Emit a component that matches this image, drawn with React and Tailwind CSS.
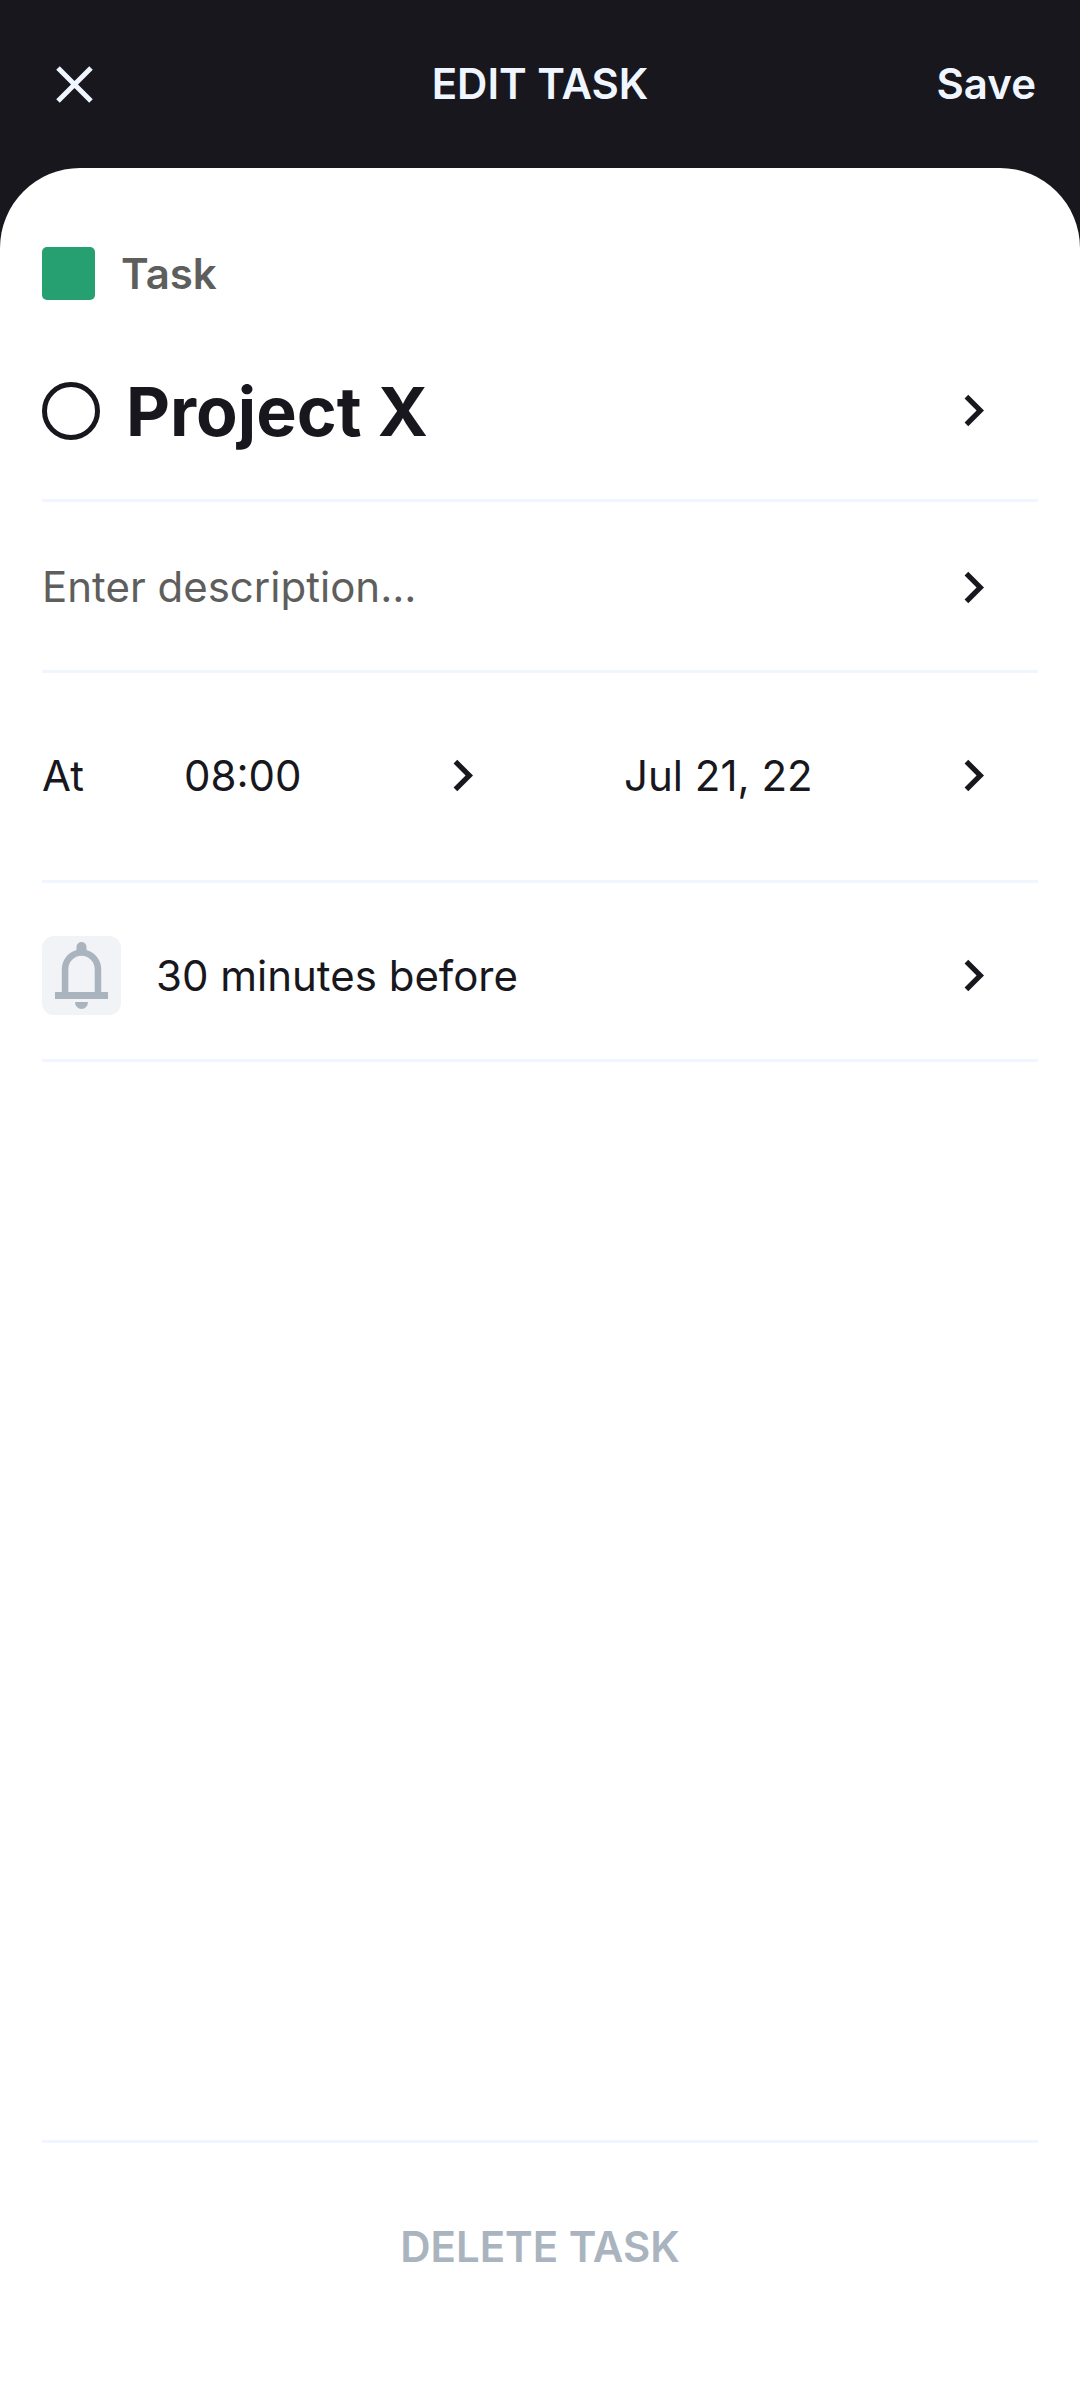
import { MdChevronRight } from "react-icons/md";

function Chevron() {
  return <MdChevronRight className="size-[63px] shrink-0" aria-hidden="true" />;
}

function CloseIcon() {
  return (
    <svg viewBox="0 0 37 37" className="size-[37px]" fill="none" stroke="currentColor" strokeWidth="5" aria-hidden="true">
      <path d="M2 2l33 33M35 2l-33 33" />
    </svg>
  );
}

function BellIcon() {
  return (
    <svg viewBox="0 0 79 79" className="size-[79px]" fill="currentColor" aria-hidden="true">
      <path d="M34.500 14v-3a5 5 0 0 1 10 0v3a20 20 0 0 1 14.700 19.500V56H66v7H13v-7h6.800V33.500A20 20 0 0 1 34.500 14zM26.300 56h26.400V33a13.200 13.200 0 0 0-26.400 0z" />
      <path d="M33 66h13a6.500 7 0 0 1-13 0z" />
    </svg>
  );
}

export default function App() {
  return (
    <div className="flex min-h-screen flex-col bg-[#18171d] font-['Inter',sans-serif] text-[42px] leading-[52px] text-[#18171d]">
      <header className="grid h-[168px] grid-cols-[1fr_auto_1fr] items-center px-[44px] text-[#eff6ff]">
        <button type="button" aria-label="Close" className="justify-self-start px-3">
          <CloseIcon />
        </button>
        <h1 className="font-semibold">EDIT TASK</h1>
        <button type="button" className="justify-self-end font-semibold">Save</button>
      </header>

      <main className="flex flex-1 flex-col rounded-t-[80px] bg-white px-[42px] pt-[79px]">
        <div className="flex items-center gap-[26px] font-semibold text-[#5e5e5c]">
          <span className="size-[53px] rounded-[5px] bg-[#27a071]" />
          Task
        </div>

        <div className="flex h-[202px] items-center gap-[26px] border-b-3 border-[#eff6ff] pt-[22px]">
          <input
            type="checkbox"
            aria-label="Mark Project X as done"
            className="size-[58px] shrink-0 appearance-none rounded-full border-5 border-[#18171d]"
          />
          <button type="button" className="flex flex-1 items-center justify-between pr-[33px] text-left text-[68px] leading-[84px] font-bold">
            Project X
            <Chevron />
          </button>
        </div>

        <button type="button" className="flex h-[171px] items-center justify-between border-b-3 border-[#eff6ff] pt-[2px] pr-[33px] text-left text-[#5e5e5c]">
          Enter description...
          <span className="text-[#18171d]">
            <Chevron />
          </span>
        </button>

        <div className="flex h-[210px] items-center border-b-3 border-[#eff6ff] pr-[33px] pb-[2px]">
          <span className="w-[142px]">At</span>
          <button type="button" className="mr-[130px] flex w-[310px] items-center justify-between">
            08:00
            <Chevron />
          </button>
          <button type="button" className="flex flex-1 items-center justify-between">
            Jul 21, 22
            <Chevron />
          </button>
        </div>

        <button type="button" className="flex h-[179px] items-center gap-[35px] border-b-3 border-[#eff6ff] pt-[9px] pr-[33px] text-left">
          <span className="rounded-[12px] bg-[#f1f3f7] text-[#a9b4bf]">
            <BellIcon />
          </span>
          <span className="flex-1">30 minutes before</span>
          <Chevron />
        </button>

        <button type="button" className="mt-auto h-[260px] border-t-3 border-[#eff6ff] pb-[50px] font-semibold text-[#a9b4bf]">
          DELETE TASK
        </button>
      </main>
    </div>
  );
}
